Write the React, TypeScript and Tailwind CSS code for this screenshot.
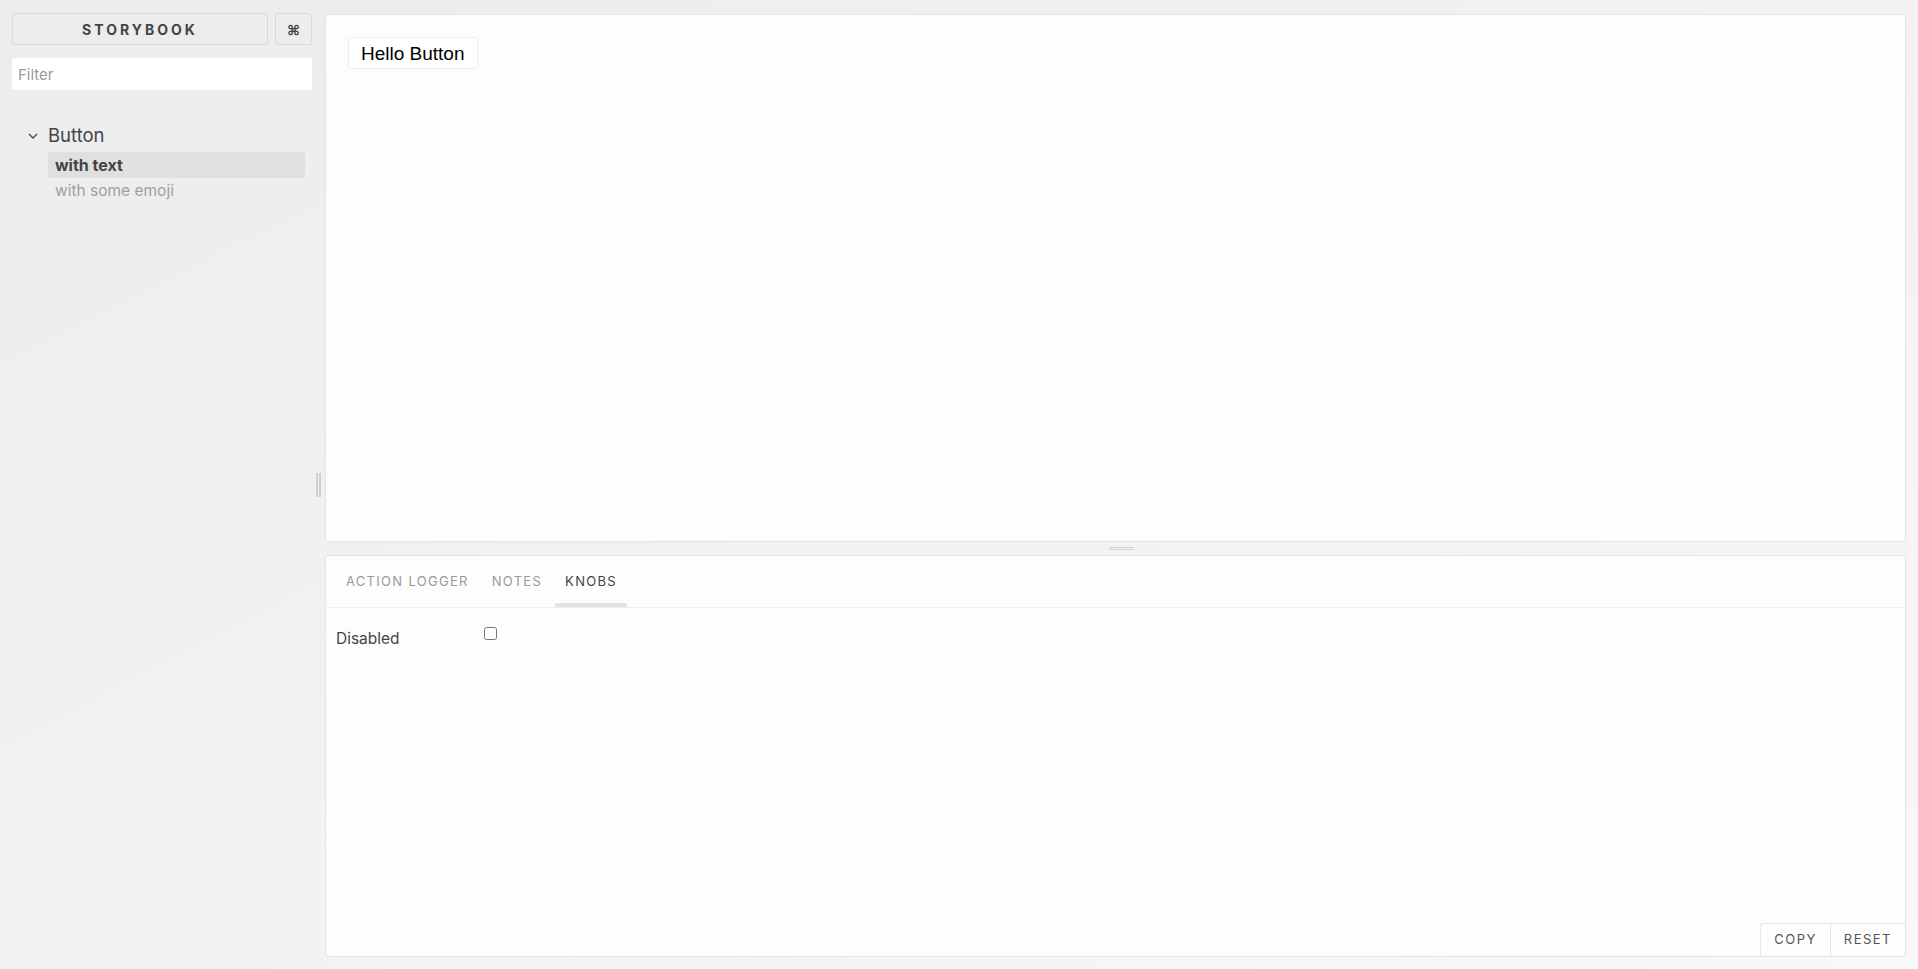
import React, { useState } from "react";

const shell = { fontFamily: "Inter, 'Noto Sans', sans-serif" };

function Sidebar() {
  const [filter, setFilter] = useState("");
  return (
    <div className="flex w-[312px] shrink-0 flex-col pl-3 pt-[13px]">
      {/* Header */}
      <div className="flex gap-[7px]">
        <button className="flex h-8 flex-1 items-center justify-center rounded-[3px] border border-[#d9d9d9] text-[14px] font-bold tracking-[3px] text-[#444]">
          STORYBOOK
        </button>
        <button className="flex h-8 w-[37px] items-center justify-center rounded-[3px] border border-[#d9d9d9] text-[14px] font-bold text-[#444]">
          ⌘
        </button>
      </div>

      {/* Filter */}
      <input
        value={filter}
        onChange={(e: React.ChangeEvent<HTMLInputElement>) => setFilter(e.target.value)}
        placeholder="Filter"
        className="mt-[13px] h-8 w-full rounded-[3px] bg-white px-[6px] text-[15px] text-[#444] outline-none placeholder:text-[#999]"
      />

      {/* Story tree */}
      <div className="mt-[33px] flex flex-col">
        <div className="mb-[3px] flex h-[26px] items-center">
          <svg width="10" height="6" viewBox="0 0 10 6" className="ml-[16px] mr-[10px]" aria-hidden="true">
            <path d="M1 1l4 4 4-4" fill="none" stroke="#444" strokeWidth="1.3" />
          </svg>
          <span className="text-[18.5px] text-[#444]">Button</span>
        </div>
        <div className="ml-[36px] mr-[7px] flex h-[26px] items-center bg-[#e0e0e0] pl-[7px] text-[16px] font-bold text-[#444]">
          with text
        </div>
        <div className="ml-[36px] flex h-[26px] items-center pl-[7px] text-[15.5px] text-[#a0a0a0]">
          with some emoji
        </div>
      </div>
    </div>
  );
}

function Tabs() {
  const tabs = ["ACTION LOGGER", "NOTES", "KNOBS"];
  const active = "KNOBS";
  return (
    <div className="flex h-[52px] shrink-0 items-stretch gap-[3px] border-b border-[#eee] pl-[10px]">
      {tabs.map((t) => (
        <div
          key={t}
          className={
            t === active
              ? "flex items-center border-b-[4px] border-[#e3e3e3] px-[10px] pt-[4px] text-[13px] tracking-[1.3px] text-[#444]"
              : "flex items-center border-b-[4px] border-transparent px-[10px] pt-[4px] text-[13px] tracking-[1.3px] text-[#9a9a9a]"
          }
        >
          {t}
        </div>
      ))}
    </div>
  );
}

export default function App() {
  const [disabled, setDisabled] = useState(false);

  return (
    <div
      className="flex h-[969px] w-full bg-linear-to-br from-[#ececec] to-[#f8f8f8]"
      style={shell}
    >
      <Sidebar />

      {/* Vertical resizer */}
      <div className="flex w-[13px] shrink-0 items-center justify-center">
        <div className="flex h-6 gap-px">
          <div className="w-[2px] bg-[#cfcfcf]" />
          <div className="w-[2px] bg-[#cfcfcf]" />
        </div>
      </div>

      <div className="flex min-w-0 flex-1 flex-col pb-3 pr-3 pt-[14px]">
        {/* Preview */}
        <div className="h-[528px] shrink-0 rounded-[4px] border border-[#e4e4e4] bg-[#fdfdfd] p-[22px]">
          <button
            className="h-[32px] rounded-[3px] border border-[#eee] bg-white px-[12px] pt-[2px] text-[19px] text-black"
            style={{ fontFamily: "'Liberation Sans', Arial, sans-serif" }}
          >
            Hello Button
          </button>
        </div>

        {/* Horizontal resizer */}
        <div className="flex h-[13px] shrink-0 items-center justify-center pl-[11px]">
          <div className="flex w-[25px] flex-col gap-px">
            <div className="h-px bg-[#cfcfcf]" />
            <div className="h-px bg-[#cfcfcf]" />
          </div>
        </div>

        {/* Addon panel */}
        <div className="flex min-h-0 flex-1 flex-col rounded-[4px] border border-[#e4e4e4] bg-[#fdfdfd]">
          <Tabs />
          <div className="flex flex-1 flex-col">
            <div className="flex items-start pl-[10px] pt-[18px]">
              <span className="w-[148px] pt-[1px] text-[15.5px] text-[#444]">Disabled</span>
              <input
                type="checkbox"
                checked={disabled}
                onChange={() => setDisabled(!disabled)}
                className="mt-[1px] h-[13px] w-[13px]"
              />
            </div>
            <div className="mt-auto flex justify-end">
              <div className="flex h-[33px] rounded-tl-[4px] border-l border-t border-[#e6e6e6] text-[13px] tracking-[1.5px] text-[#555]">
                <button className="px-[13px]">COPY</button>
                <button className="border-l border-[#e6e6e6] px-[13px]">RESET</button>
              </div>
            </div>
          </div>
        </div>
      </div>
    </div>
  );
}
